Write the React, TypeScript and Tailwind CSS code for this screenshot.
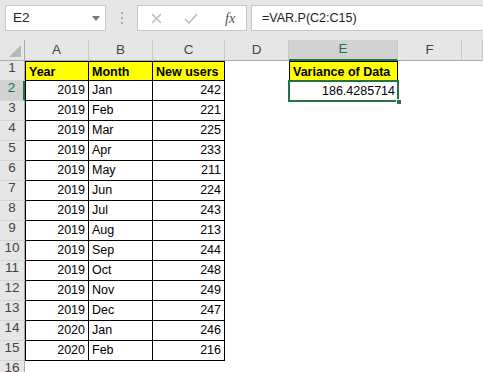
import React from "react";

const COLS = ["A", "B", "C", "D", "E", "F", ""];

const DATA: [number, string, number][] = [
  [2019, "Jan", 242],
  [2019, "Feb", 221],
  [2019, "Mar", 225],
  [2019, "Apr", 233],
  [2019, "May", 211],
  [2019, "Jun", 224],
  [2019, "Jul", 243],
  [2019, "Aug", 213],
  [2019, "Sep", 244],
  [2019, "Oct", 248],
  [2019, "Nov", 249],
  [2019, "Dec", 247],
  [2020, "Jan", 246],
  [2020, "Feb", 216],
];

const cellFont = { fontFamily: '"Liberation Sans", Arial, sans-serif' };

function RowHead({ n, active }: { n: number; active?: boolean }) {
  return (
    <div
      className={
        "flex items-end justify-center pb-[2px] text-[13.5px] border-b border-[#d4d4d4] " +
        (active
          ? "bg-[#d2d2d2] text-[#217346] border-r-2 border-r-[#217346]"
          : "bg-[#e6e6e6] text-[#444] border-r border-r-[#ababab]")
      }
    >
      {n}
    </div>
  );
}

export default function App() {
  return (
    <div className="w-[483px] h-[372px] overflow-hidden bg-white" style={cellFont}>
      {/* Formula bar */}
      <div className="h-[40px] bg-[#e6e6e6] flex items-start pt-[5px] pl-[5px]">
        <div className="w-[101px] h-[26px] bg-white border border-[#c6c6c6] flex items-center justify-between pl-[7px] pr-[5px]">
          <span className="text-[13.5px] text-[#222]">E2</span>
          <svg width="8" height="5" viewBox="0 0 8 5">
            <path d="M0 0 L8 0 L4 5 Z" fill="#777" />
          </svg>
        </div>
        <div className="w-[31px] h-[26px] flex flex-col items-center justify-center gap-[3px]">
          <span className="w-[2px] h-[2px] bg-[#a8a8a8]" />
          <span className="w-[2px] h-[2px] bg-[#a8a8a8]" />
          <span className="w-[2px] h-[2px] bg-[#a8a8a8]" />
        </div>
        <div className="w-[110px] h-[26px] bg-white border border-[#c6c6c6] flex items-center pl-[13px]">
          <svg width="11" height="11" viewBox="0 0 11 11">
            <path d="M1 1 L10 10 M10 1 L1 10" stroke="#bdbdbd" strokeWidth="1.6" />
          </svg>
          <svg width="14" height="11" viewBox="0 0 14 11" className="ml-[22px]">
            <path d="M1 6 L5 10 L13 1" stroke="#bdbdbd" strokeWidth="1.6" fill="none" />
          </svg>
          <span
            className="ml-[27px] text-[14px] italic text-[#555]"
            style={{ fontFamily: '"Liberation Serif", "Times New Roman", serif' }}
          >
            fx
          </span>
        </div>
        <div className="flex-1 ml-[4px] h-[26px] bg-white border border-[#c6c6c6] border-r-0 flex items-center pl-[10px]">
          <span className="text-[12.5px] text-[#222]">=VAR.P(C2:C15)</span>
        </div>
      </div>

      {/* Sheet grid */}
      <div className="grid grid-cols-[25px_64px_64px_72px_64px_109px_64px_1fr] grid-rows-[21px_repeat(16,20px)] text-[12.5px] text-black">
        {/* corner */}
        <div className="bg-[#e6e6e6] border-r border-b border-[#ababab] relative">
          <svg width="12" height="12" viewBox="0 0 12 12" className="absolute right-[3px] bottom-[3px]">
            <path d="M12 0 L12 12 L0 12 Z" fill="#b7b7b7" />
          </svg>
        </div>
        {COLS.map((c, i) => (
          <div
            key={i}
            className={
              "flex items-center justify-center text-[13.5px] border-r border-[#c8c8c8] " +
              (c === "E"
                ? "bg-[#d2d2d2] text-[#217346] border-b-2 border-b-[#217346]"
                : "bg-[#e6e6e6] text-[#444] border-b border-b-[#ababab]")
            }
          >
            {c}
          </div>
        ))}

        {/* row 1 */}
        <RowHead n={1} />
        <div className="bg-[#ffff00] border border-black font-bold pl-[3px] leading-[18px] pt-[1px]">Year</div>
        <div className="bg-[#ffff00] border-y border-r border-black font-bold pl-[3px] leading-[18px] pt-[1px]">Month</div>
        <div className="bg-[#ffff00] border-y border-r border-black font-bold pl-[3px] leading-[18px] pt-[1px]">New users</div>
        <div />
        <div className="bg-[#ffff00] border border-black font-bold pl-[3px] leading-[18px] pt-[1px]">Variance of Data</div>
        <div />
        <div />

        {DATA.map(([y, m, n], i) => (
          <React.Fragment key={i}>
            <RowHead n={i + 2} active={i === 0} />
            <div className="border-x border-b border-black text-right pr-[3px] leading-[19px]">{y}</div>
            <div className="border-r border-b border-black pl-[3px] leading-[19px]">{m}</div>
            <div className="border-r border-b border-black text-right pr-[3px] leading-[19px]">{n}</div>
            <div />
            {i === 0 ? (
              <div className="relative border-2 border-[#217346] -mx-[1px] -my-[1px] text-right pr-[2px] leading-[19px]">
                186.4285714
                <span className="absolute right-[-5px] bottom-[-5px] w-[6px] h-[6px] bg-[#217346] border border-white" />
              </div>
            ) : (
              <div />
            )}
            <div />
            <div />
          </React.Fragment>
        ))}

        {/* row 16 */}
        <RowHead n={16} />
        <div />
        <div />
        <div />
        <div />
        <div />
        <div />
        <div />
      </div>
    </div>
  );
}
